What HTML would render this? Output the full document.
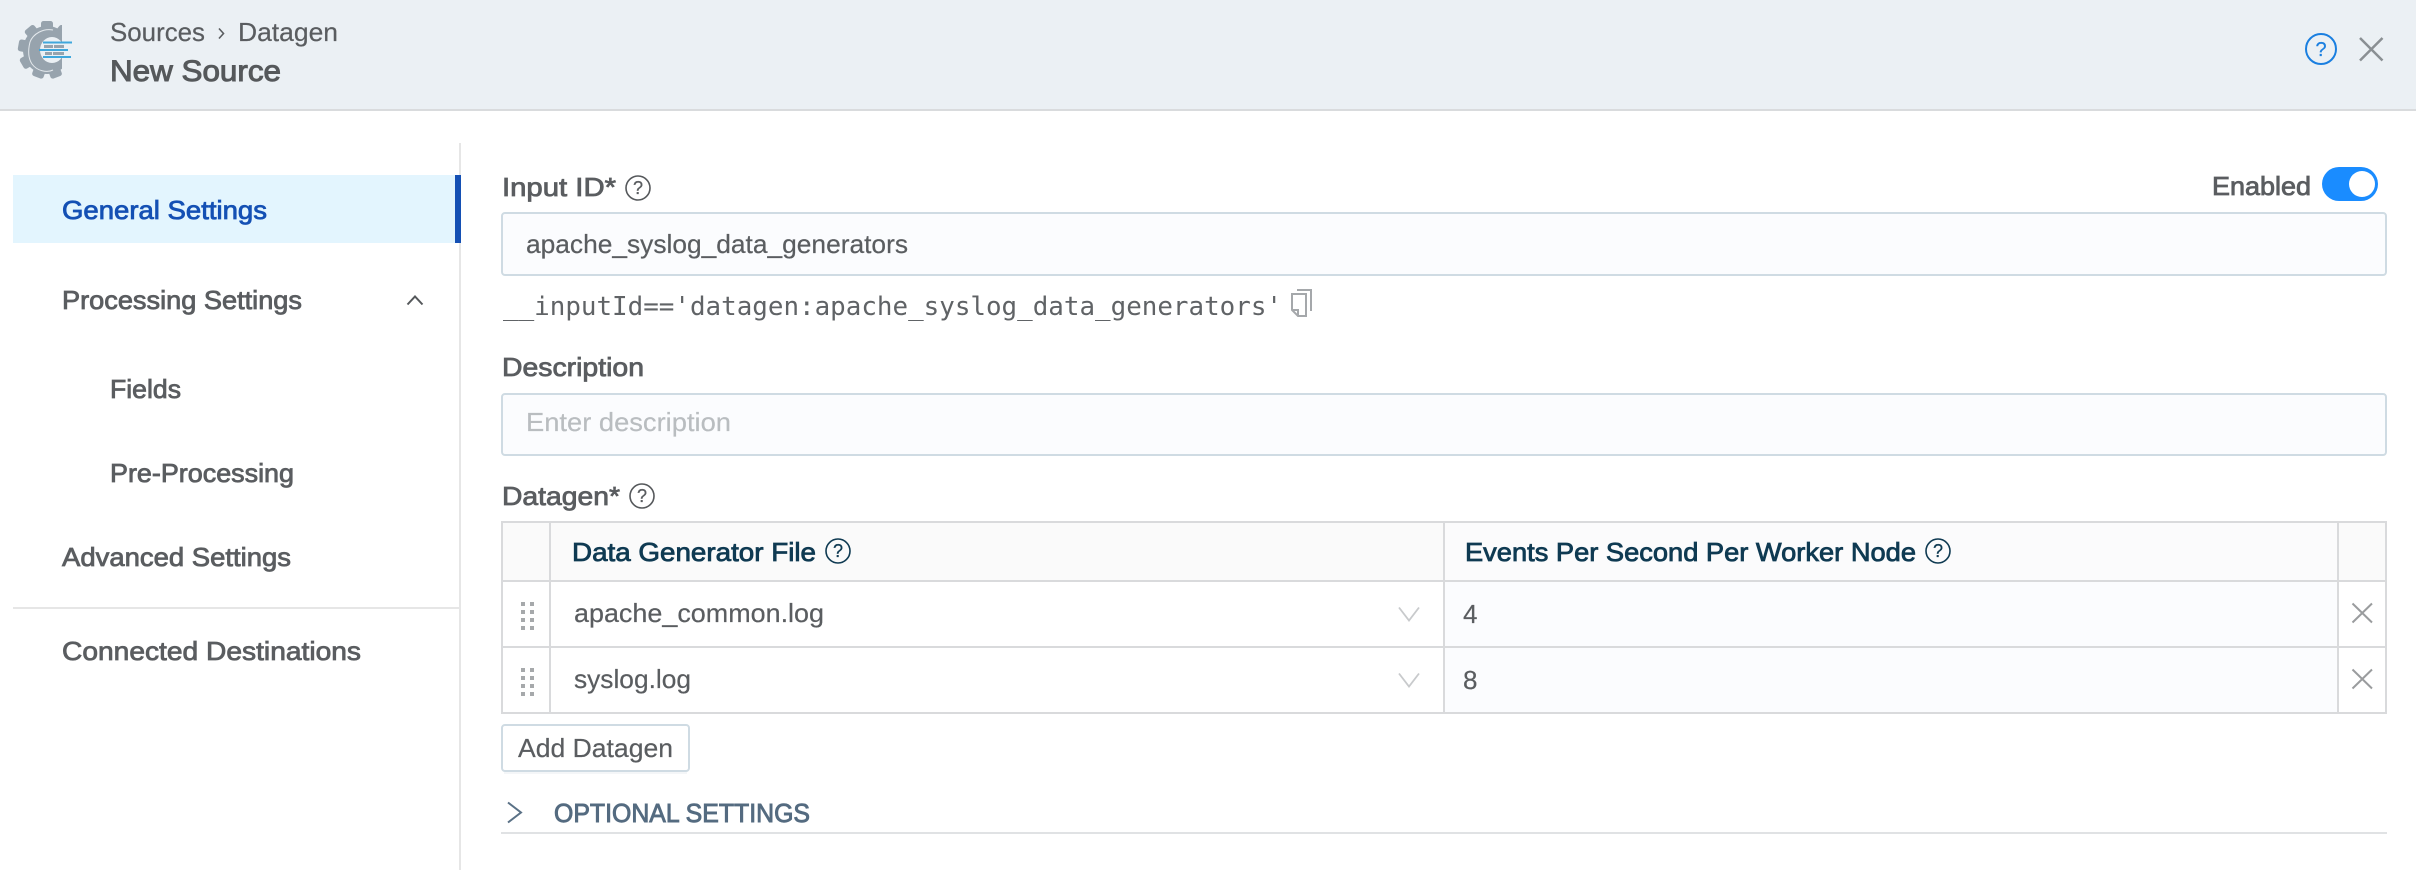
<!DOCTYPE html>
<html lang="en">
<head>
<meta charset="utf-8">
<title>New Source</title>
<style>
html,body{margin:0;padding:0;background:#fff;width:2416px;height:870px;overflow:hidden}
svg{display:block}
text{font-family:"Liberation Sans",Arial,sans-serif;font-size:26px;fill:#5a5d60;stroke:#5a5d60;stroke-width:.2px}
.s{stroke:#5a5d60;stroke-width:.8px}
.mono{font-family:"DejaVu Sans Mono","Liberation Mono",monospace;font-size:26px;fill:#606366;stroke:none}
.th{fill:#0f3a52;stroke:#0f3a52;stroke-width:.8px}
.ln{fill:#d9dadc}
.qm{font-size:18px;text-anchor:middle;stroke-width:.3px}
</style>
</head>
<body>
<svg width="2416" height="870" viewBox="0 0 2416 870" xmlns="http://www.w3.org/2000/svg">
<defs>
<clipPath id="gc"><rect x="10" y="15" width="52" height="70"/></clipPath>
<g id="tooth"><rect x="-6" y="-29" width="12" height="12" rx="2.5"/></g>
<g id="dots" fill="#a6a9ab">
<rect x="0" y="0" width="4" height="4"/><rect x="9" y="0" width="4" height="4"/>
<rect x="0" y="8" width="4" height="4"/><rect x="9" y="8" width="4" height="4"/>
<rect x="0" y="16" width="4" height="4"/><rect x="9" y="16" width="4" height="4"/>
<rect x="0" y="24" width="4" height="4"/><rect x="9" y="24" width="4" height="4"/>
</g>
</defs>

<!-- header -->
<rect x="0" y="0" width="2416" height="109" fill="#ebf0f4"/>
<rect x="0" y="109" width="2416" height="2" fill="#d9dbdd"/>

<!-- logo -->
<g clip-path="url(#gc)" fill="#97a3ad">
<g transform="translate(47 50)">
<use href="#tooth"/>
<use href="#tooth" transform="rotate(40)"/>
<use href="#tooth" transform="rotate(80)"/>
<use href="#tooth" transform="rotate(120)"/>
<use href="#tooth" transform="rotate(160)"/>
<use href="#tooth" transform="rotate(200)"/>
<use href="#tooth" transform="rotate(240)"/>
<use href="#tooth" transform="rotate(280)"/>
<use href="#tooth" transform="rotate(320)"/>
<circle cx="0" cy="0" r="24"/>
<path d="M6-20C-4-22-14-16-17-8-19 0-19 8-15 14-10 21 0 23 6 20" fill="none" stroke="#e4e9ed" stroke-width="1"/>
</g>
</g>
<ellipse cx="52" cy="50" rx="12" ry="13" fill="#ebf0f4"/>
<rect x="44" y="45" width="9" height="3" fill="#97a3ad"/><rect x="54" y="45" width="10" height="3" fill="#97a3ad"/>
<rect x="45" y="52" width="7" height="3" fill="#97a3ad"/><rect x="53" y="52" width="11" height="3" fill="#97a3ad"/>
<rect x="43" y="41.5" width="29" height="2" fill="#3fa7dc"/>
<rect x="39" y="49" width="29" height="2" fill="#3fa7dc"/>
<rect x="43" y="56" width="28" height="2" fill="#3fa7dc"/>

<!-- breadcrumb -->
<text x="110" y="41" textLength="95" lengthAdjust="spacingAndGlyphs">Sources</text>
<path d="M219 28.500L223.500 33.500 219 38.500" fill="none" stroke="#5a5d60" stroke-width="1.600"/>
<text x="238" y="41" textLength="100" lengthAdjust="spacingAndGlyphs">Datagen</text>
<text x="110" y="81" style="font-size:30px;fill:#55585b;stroke:#55585b;stroke-width:1px" textLength="171" lengthAdjust="spacingAndGlyphs">New Source</text>

<!-- header icons -->
<circle cx="2321" cy="49" r="15" fill="none" stroke="#1a7fe0" stroke-width="2"/>
<text x="2321" y="56" style="font-size:20px;fill:#1a7fe0;stroke:#1a7fe0;text-anchor:middle">?</text>
<path d="M2360 38L2382.500 60.500M2382.500 38L2360 60.500" stroke="#8a8f93" stroke-width="2.500" fill="none"/>

<!-- sidebar -->
<rect x="459" y="143" width="2" height="727" fill="#e6e6e6"/>
<rect x="13" y="175" width="448" height="68" fill="#e3f5fe"/>
<rect x="455" y="175" width="6" height="68" fill="#1450b4"/>
<text x="62" y="219" style="fill:#1450b4;stroke:#1450b4;stroke-width:.8px" textLength="205" lengthAdjust="spacingAndGlyphs">General Settings</text>
<text class="s" x="62" y="309" textLength="240" lengthAdjust="spacingAndGlyphs">Processing Settings</text>
<path d="M407.500 304.500L415 296.500 422.500 304.500" fill="none" stroke="#55585b" stroke-width="2"/>
<text class="s" x="110" y="398" textLength="71" lengthAdjust="spacingAndGlyphs">Fields</text>
<text class="s" x="110" y="482" textLength="184" lengthAdjust="spacingAndGlyphs">Pre-Processing</text>
<text class="s" x="62" y="566" textLength="229" lengthAdjust="spacingAndGlyphs">Advanced Settings</text>
<rect x="13" y="607" width="446" height="2" fill="#e6e6e6"/>
<text class="s" x="62" y="660" textLength="299" lengthAdjust="spacingAndGlyphs">Connected Destinations</text>

<!-- input id -->
<text class="s" x="502" y="196" textLength="114" lengthAdjust="spacingAndGlyphs">Input ID*</text>
<circle cx="638" cy="188" r="12" fill="none" stroke="#55585b" stroke-width="1.600"/>
<text class="qm" x="638" y="194">?</text>
<text class="s" x="2212" y="195" textLength="99" lengthAdjust="spacingAndGlyphs">Enabled</text>
<rect x="2322" y="167" width="56" height="34" rx="17" fill="#1a8cff"/>
<circle cx="2362" cy="184" r="13" fill="#fff"/>

<rect x="502" y="213" width="1884" height="62" rx="3" fill="#fbfcfe" stroke="#cfdbe3" stroke-width="2"/>
<text x="526" y="253" textLength="382" lengthAdjust="spacingAndGlyphs">apache_syslog_data_generators</text>
<text class="mono" x="503" y="315" textLength="779" lengthAdjust="spacingAndGlyphs">__inputId=='datagen:apache_syslog_data_generators'</text>
<path d="M1297 290H1311V311" fill="none" stroke="#a5a8ab" stroke-width="2"/>
<path d="M1292 294H1306V316H1298L1292 310ZM1292 310H1298V316" fill="none" stroke="#a5a8ab" stroke-width="2"/>

<!-- description -->
<text class="s" x="502" y="376" textLength="142" lengthAdjust="spacingAndGlyphs">Description</text>
<rect x="502" y="394" width="1884" height="61" rx="3" fill="#fbfcfe" stroke="#cfdbe3" stroke-width="2"/>
<text x="526" y="431" style="fill:#b9bdc0;stroke:#b9bdc0" textLength="205" lengthAdjust="spacingAndGlyphs">Enter description</text>

<!-- datagen -->
<text class="s" x="502" y="505" textLength="118" lengthAdjust="spacingAndGlyphs">Datagen*</text>
<circle cx="642" cy="496" r="12" fill="none" stroke="#55585b" stroke-width="1.600"/>
<text class="qm" x="642" y="502">?</text>

<!-- table -->
<rect x="501" y="521" width="943" height="60" fill="#fafafa"/>
<rect x="1444" y="523" width="893" height="58" fill="#fbfbfc"/>
<rect x="2338" y="523" width="48" height="58" fill="#fafafa"/>
<rect x="1445" y="581" width="893" height="132" fill="#fbfcfe"/>
<rect class="ln" x="501" y="521" width="1886" height="2"/>
<rect class="ln" x="501" y="580" width="1886" height="2"/>
<rect class="ln" x="501" y="646" width="1886" height="2"/>
<rect class="ln" x="501" y="712" width="1886" height="2"/>
<rect class="ln" x="501" y="521" width="2" height="193"/>
<rect class="ln" x="549" y="521" width="2" height="193"/>
<rect class="ln" x="1443" y="521" width="2" height="193"/>
<rect class="ln" x="2337" y="521" width="2" height="193"/>
<rect class="ln" x="2385" y="521" width="2" height="193"/>

<text class="th" x="572" y="561" textLength="244" lengthAdjust="spacingAndGlyphs">Data Generator File</text>
<circle cx="838" cy="551" r="12" fill="none" stroke="#0f3a52" stroke-width="1.600"/>
<text class="qm" x="838" y="557" style="fill:#0f3a52;stroke:#0f3a52">?</text>
<text class="th" x="1465" y="561" textLength="451" lengthAdjust="spacingAndGlyphs">Events Per Second Per Worker Node</text>
<circle cx="1938" cy="551" r="12" fill="none" stroke="#0f3a52" stroke-width="1.600"/>
<text class="qm" x="1938" y="557" style="fill:#0f3a52;stroke:#0f3a52">?</text>

<use href="#dots" x="521" y="602"/>
<use href="#dots" x="521" y="668"/>

<text x="574" y="622" textLength="250" lengthAdjust="spacingAndGlyphs">apache_common.log</text>
<text x="574" y="688" textLength="117" lengthAdjust="spacingAndGlyphs">syslog.log</text>
<path d="M1399 607.500L1409 620.500 1419 607.500" fill="none" stroke="#c8cacc" stroke-width="1.800"/>
<path d="M1399 673.500L1409 686.500 1419 673.500" fill="none" stroke="#c8cacc" stroke-width="1.800"/>
<text x="1463" y="623">4</text>
<text x="1463" y="689">8</text>
<path d="M2352.500 603.500L2372 622.500M2372 603.500L2352.500 622.500" stroke="#9a9c9e" stroke-width="2" fill="none"/>
<path d="M2352.500 669.500L2372 688.500M2372 669.500L2352.500 688.500" stroke="#9a9c9e" stroke-width="2" fill="none"/>

<!-- button -->
<rect x="502" y="725" width="187" height="46" rx="3" fill="#fff" stroke="#cfdbe3" stroke-width="2"/>
<rect x="504" y="772" width="183" height="2" fill="#f4f6f8"/>
<text x="518" y="757" textLength="155" lengthAdjust="spacingAndGlyphs">Add Datagen</text>

<!-- optional -->
<path d="M508 802.500L521 812.500 508 822.500" fill="none" stroke="#5a7186" stroke-width="2"/>
<text x="554" y="822" style="fill:#546b80;stroke:#546b80;stroke-width:.9px" textLength="256" lengthAdjust="spacingAndGlyphs">OPTIONAL SETTINGS</text>
<rect x="501" y="832" width="1886" height="2" fill="#e0e2e4"/>
</svg>
</body>
</html>
